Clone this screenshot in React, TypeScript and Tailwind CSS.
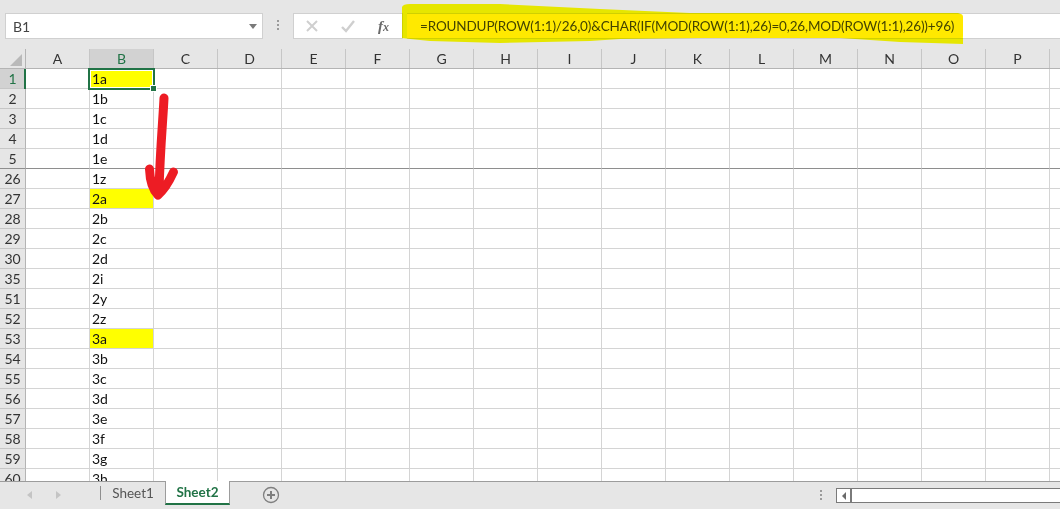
// last column only shows its gridlines at the window edge
const columns = ["A", "B", "C", "D", "E", "F", "G", "H", "I", "J", "K", "L", "M", "N", "O", "P", ""];

const rows = [
  { n: 1, v: "1a", hl: true },
  { n: 2, v: "1b" },
  { n: 3, v: "1c" },
  { n: 4, v: "1d" },
  { n: 5, v: "1e", cut: true },
  { n: 26, v: "1z" },
  { n: 27, v: "2a", hl: true },
  { n: 28, v: "2b" },
  { n: 29, v: "2c" },
  { n: 30, v: "2d" },
  { n: 35, v: "2i" },
  { n: 51, v: "2y" },
  { n: 52, v: "2z" },
  { n: 53, v: "3a", hl: true },
  { n: 54, v: "3b" },
  { n: 55, v: "3c" },
  { n: 56, v: "3d" },
  { n: 57, v: "3e" },
  { n: 58, v: "3f" },
  { n: 59, v: "3g" },
  { n: 60, v: "3h" },
];

function Dots({ className }: { className: string }) {
  return (
    <div className={"flex flex-col gap-[2px] " + className}>
      <div className="w-[2px] h-[2px] bg-[#9a9a9a]" />
      <div className="w-[2px] h-[2px] bg-[#9a9a9a]" />
      <div className="w-[2px] h-[2px] bg-[#9a9a9a]" />
    </div>
  );
}

export default function App() {
  return (
    <div className="relative w-[1060px] h-[509px] overflow-hidden flex flex-col bg-[#e6e6e6] text-[#222] font-['Lato','Liberation_Sans',sans-serif]">
      {/* formula bar */}
      <div className="h-[49px] shrink-0 flex pt-[13px] pl-[5px]">
        <div className="w-[258px] h-[26px] bg-white border border-[#d0d0d0] flex items-center justify-between pl-[7px] pr-[5px] text-[14px] text-[#444]">
          <span>B1</span>
          <div className="w-0 h-0 border-x-[4px] border-x-transparent border-t-[5px] border-t-[#7a7a7a]" />
        </div>
        <Dots className="ml-[14px] mt-[7px]" />
        <div className="ml-[14px] w-[110px] h-[26px] bg-white border border-[#d0d0d0] flex items-center">
          <svg width="14" height="14" viewBox="0 0 14 14" className="ml-[11px]">
            <path d="M2 2 12 12M12 2 2 12" stroke="#cfcfcf" strokeWidth="2" fill="none" />
          </svg>
          <svg width="14" height="14" viewBox="0 0 14 14" className="ml-[22px]">
            <path d="M1 8 5 12 13 2" stroke="#cfcfcf" strokeWidth="2.4" fill="none" />
          </svg>
          <span className="ml-[23px] text-[15px] italic font-bold text-[#6a6a6a] font-['Liberation_Serif',serif]">
            f<span className="text-[12px]">x</span>
          </span>
        </div>
        <div className="relative ml-[4px] flex-1 h-[26px] bg-white border-y border-[#d0d0d0] flex items-center pl-[13px] text-[13.5px] text-[#444400] whitespace-nowrap">
          <div className="absolute left-0 top-0 bottom-0 w-[556px] bg-[#ffe900] rounded-r-[3px]" />
          <span className="relative z-10 tracking-[-0.15px]">=ROUNDUP(ROW(1:1)/26,0)&amp;CHAR(IF(MOD(ROW(1:1),26)=0,26,MOD(ROW(1:1),26))+96)</span>
        </div>
      </div>

      {/* sheet */}
      <div className="flex-1 min-h-0 overflow-hidden bg-white">
        <div className="flex h-[20px] bg-[#e6e6e6] border-b border-[#b4b4b4]">
          <div className="relative w-[26px] shrink-0 border-r border-[#b4b4b4]">
            <div className="absolute right-[3px] bottom-[2px] w-0 h-0 border-l-[12px] border-l-transparent border-b-[12px] border-b-[#b9b9b9]" />
          </div>
          {columns.map((c) => (
            <div
              key={c}
              className={
                "w-[64px] shrink-0 flex items-center justify-center border-r border-[#c6c6c6] text-[14px] " +
                (c === "B" ? "bg-[#d2d2d2] text-[#217346]" : "text-[#333]")
              }
            >
              {c}
            </div>
          ))}
        </div>
        {rows.map((r) => {
          const line = r.cut ? "border-[#8e8e8e]" : "border-[#d4d4d4]";
          return (
            <div key={r.n} className="flex h-[20px]">
              <div
                className={
                  "w-[26px] shrink-0 flex items-center justify-center border-b border-r text-[14px] " +
                  (r.cut ? "border-b-[#8e8e8e] border-r-[#b4b4b4] " : "border-b-[#c6c6c6] border-r-[#b4b4b4] ") +
                  (r.n === 1 ? "bg-[#d2d2d2] text-[#217346]" : "bg-[#e6e6e6] text-[#333]")
                }
              >
                {r.n}
              </div>
              {columns.map((c) => (
                <div key={c} className={"w-[64px] shrink-0 border-b border-r border-r-[#d4d4d4] " + line}>
                  {c === "B" && (
                    <div className={"h-full flex items-center pl-[2px] text-[14px] text-[#111] " + (r.hl ? "bg-[#ffff00]" : "")}>
                      {r.v}
                    </div>
                  )}
                </div>
              ))}
            </div>
          );
        })}
      </div>

      {/* tab strip */}
      <div className="h-[28px] shrink-0 flex border-t border-[#9c9c9c] bg-[#e6e6e6] text-[13.5px]">
        <div className="w-[100px] shrink-0 flex items-center pb-[2px]">
          <div className="ml-[27px] w-0 h-0 border-y-[4px] border-y-transparent border-r-[5px] border-r-[#c4c4c4]" />
          <div className="ml-[24px] w-0 h-0 border-y-[4px] border-y-transparent border-l-[5px] border-l-[#c4c4c4]" />
        </div>
        <div className="w-[1px] h-[14px] mt-[4px] bg-[#8f8f8f]" />
        <div className="w-[64px] h-[22px] flex items-center justify-center text-[#555]">Sheet1</div>
        <div className="-mt-px w-[65px] h-[24px] flex items-center justify-center bg-white border-x border-[#9c9c9c] border-b-2 border-b-[#217346] font-bold text-[#217346]">
          Sheet2
        </div>
        <svg width="18" height="18" viewBox="0 0 18 18" className="ml-[32px] mt-[4px]">
          <circle cx="9" cy="9" r="7.5" fill="none" stroke="#7f7f7f" strokeWidth="1.3" />
          <path d="M9 5v8M5 9h8" stroke="#7f7f7f" strokeWidth="2" />
        </svg>
        <Dots className="ml-[540px] mt-[8px]" />
        <div className="ml-[14px] flex-1 h-[15px] mt-[6px] flex bg-white border-y border-l border-[#7a7a7a]">
          <div className="w-[15px] flex items-center justify-center border-r-2 border-[#7a7a7a]">
            <div className="w-0 h-0 border-y-[4px] border-y-transparent border-r-[4px] border-r-[#6a6a6a]" />
          </div>
        </div>
      </div>

      {/* selection box and fill handle */}
      <div className="absolute left-[88px] top-[68px] w-[67px] h-[22px] border-2 border-[#217346] shadow-[inset_0_0_0_1px_white] pointer-events-none" />
      <div className="absolute left-[150px] top-[85px] w-[7px] h-[7px] bg-[#217346] border border-white" />
      <div className="absolute left-[24px] top-[69px] w-[2px] h-[20px] bg-[#217346]" />

      {/* yellow highlighter over the formula */}
      <svg width="1060" height="60" viewBox="0 0 1060 60" className="absolute left-0 top-0 mix-blend-multiply pointer-events-none">
        <path
          d="M402 7Q403 4 410 4L500 4 600 9 690 13 958 13Q963 14 963 20L963 44 900 42 840 38 700 38 620 39 590 41 500 43 430 41 410 39 402 38Z"
          fill="#ffff00"
        />
      </svg>

      {/* red arrow drawn over the sheet */}
      <svg width="1060" height="509" viewBox="0 0 1060 509" className="absolute left-0 top-0 pointer-events-none">
        <path
          d="M164 98C163 120 160 150 159 192M149.500 169C150 182 153 190 158 195C164 190 168 184 173.500 172"
          fill="none"
          stroke="#ed1c24"
          strokeWidth="9"
          strokeLinecap="round"
          strokeLinejoin="round"
        />
      </svg>
    </div>
  );
}
